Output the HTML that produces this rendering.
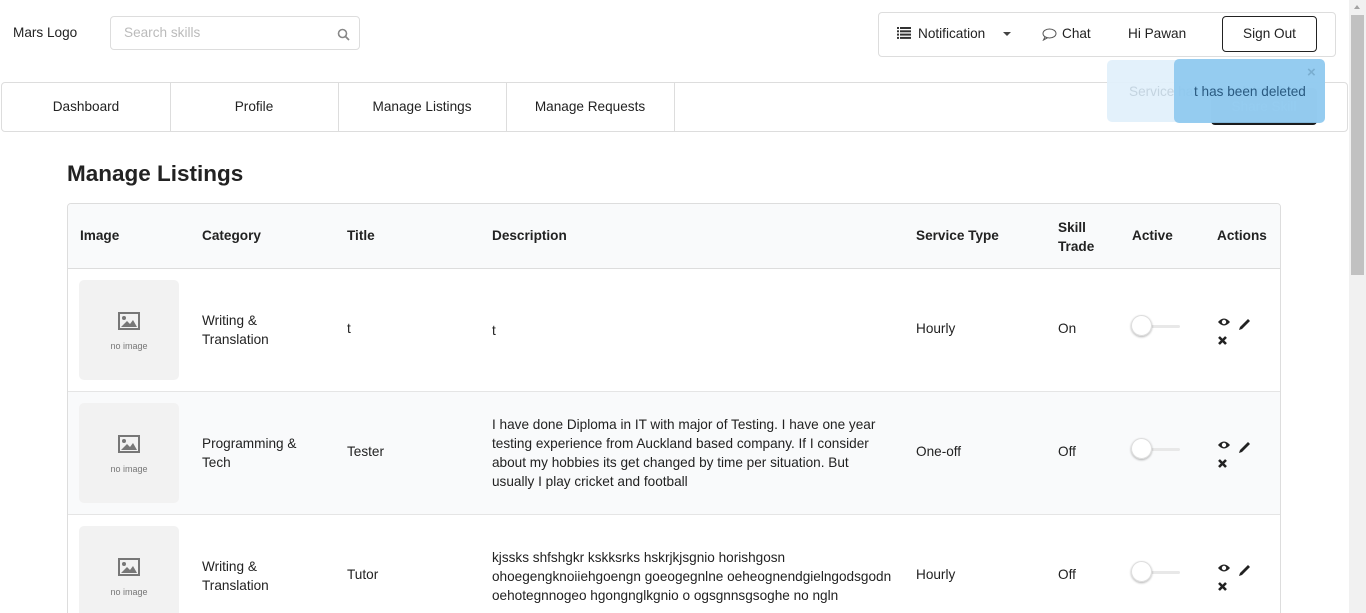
<!DOCTYPE html>
<html style="width:1366px;height:613px;overflow:hidden"><head><meta charset="utf-8"><style>
*{box-sizing:border-box;margin:0;padding:0}
body{width:1366px;height:613px;overflow:hidden;background:#fff;font-family:"Liberation Sans",sans-serif;color:#222;font-size:13.6px;position:relative}
.a{position:absolute}
.nav{left:1px;top:82px;width:1347px;height:50px;border:1px solid #ddd;border-radius:4px}
.nav div{position:absolute;top:0;height:48px;line-height:48px;text-align:center;width:169px;border-right:1px solid #ddd}
.hd{font-weight:bold;font-size:13.6px}
.img{width:100px;height:100px;background:#f2f2f2;border-radius:5px}
.img span{position:absolute;left:0;right:0;top:61px;text-align:center;font-size:9px;color:#777}
</style></head><body>
<div class="a" style="left:13px;top:25px">Mars Logo</div>
<div class="a" style="left:110px;top:16px;width:250px;height:34px;border:1px solid #ddd;border-radius:4px"><span class="a" style="left:13px;top:8px;color:#bbb">Search skills</span>
<svg class="a" style="left:226px;top:11px" width="13" height="13" viewBox="0 0 13 13"><circle cx="5.5" cy="5.5" r="4" fill="none" stroke="#888" stroke-width="1.6"/><path d="M8.5 8.5L12 12" stroke="#888" stroke-width="1.8"/></svg></div>
<div class="a" style="left:878px;top:12px;width:458px;height:45px;border:1px solid #ddd;border-radius:4px"></div>
<svg class="a" style="left:897px;top:27px" width="14" height="12" viewBox="0 0 14 12"><g fill="#333"><rect x="0" y="0" width="2" height="2"/><rect x="3" y="0" width="11" height="2"/><rect x="0" y="3.3" width="2" height="2"/><rect x="3" y="3.3" width="11" height="2"/><rect x="0" y="6.6" width="2" height="2"/><rect x="3" y="6.6" width="11" height="2"/><rect x="0" y="9.9" width="2" height="2"/><rect x="3" y="9.9" width="11" height="2"/></g></svg>
<div class="a" style="left:918px;top:26px">Notification</div>
<div class="a" style="left:1003px;top:32px;border:4px solid transparent;border-top:4px solid #444;border-bottom:0"></div>
<svg class="a" style="left:1042px;top:28px" width="15" height="13" viewBox="0 0 15 13"><ellipse cx="7.5" cy="5.5" rx="6.5" ry="4.5" fill="none" stroke="#555" stroke-width="1"/><path d="M3 9L1.5 12L5.5 9.8" fill="none" stroke="#555" stroke-width="1"/></svg>
<div class="a" style="left:1062px;top:26px">Chat</div>
<div class="a" style="left:1128px;top:26px">Hi Pawan</div>
<div class="a" style="left:1222px;top:16px;width:95px;height:36px;border:1px solid #222;border-radius:4px;text-align:center;line-height:34px">Sign Out</div>
<div class="a nav"><div style="left:0">Dashboard</div><div style="left:168px">Profile</div><div style="left:336px">Manage Listings</div><div style="left:504px">Manage Requests</div></div>
<div class="a" style="left:1211px;top:88px;width:106px;height:37px;background:#1b1c1d;border-radius:4px;color:#fff;text-align:center;line-height:37px">Share Skill</div>
<div class="a" style="left:1107px;top:60px;width:218px;height:62px;background:rgba(225,240,251,0.93);border-radius:5px"><span class="a" style="left:22px;top:24px;color:#c4d4e0">Service has been deleted</span></div>
<div class="a" style="left:1174px;top:59px;width:151px;height:64px;background:rgba(140,200,238,0.9);border-radius:5px"><span class="a" style="left:20px;top:25px;color:#2a5a80">t has been deleted</span><span class="a" style="left:133px;top:5px;color:#7aaed0;font-weight:bold;font-size:15px">×</span></div>
<div class="a" style="left:67px;top:161px;font-size:22.5px;font-weight:bold;color:#222">Manage Listings</div>
<div class="a" style="left:67px;top:203px;width:1214px;height:420px;border:1px solid #ddd;border-radius:4px;overflow:hidden">
<div class="a" style="left:0;top:0;width:1214px;height:65px;background:#f9fafb;border-bottom:1px solid #ddd"></div>
<div class="a" style="left:0;top:187px;width:1214px;height:124px;background:#f9fafb;border-top:1px solid #e5e5e5;border-bottom:1px solid #e5e5e5"></div>
</div>
<div class="a hd" style="left:80px;top:228px">Image</div>
<div class="a hd" style="left:202px;top:228px">Category</div>
<div class="a hd" style="left:347px;top:228px">Title</div>
<div class="a hd" style="left:492px;top:228px">Description</div>
<div class="a hd" style="left:916px;top:228px">Service Type</div>
<div class="a hd" style="left:1058px;top:218px;line-height:19px">Skill<br>Trade</div>
<div class="a hd" style="left:1132px;top:228px">Active</div>
<div class="a hd" style="left:1217px;top:228px">Actions</div>
<div id="rows"></div>
<script>
var rows=[[280,"Writing &<br>Translation","t","t","Hourly","On"],[403,"Programming &<br>Tech","Tester","I have done Diploma in IT with major of Testing. I have one year<br>testing experience from Auckland based company. If I consider<br>about my hobbies its get changed by time per situation. But<br>usually I play cricket and football","One-off","Off"],[526,"Writing &<br>Translation","Tutor","kjssks shfshgkr kskksrks hskrjkjsgnio horishgosn<br>ohoegengknoiiehgoengn goeogegnlne oeheognendgielngodsgodn<br>oehotegnnogeo hgongnglkgnio o ogsgnnsgsoghe no ngln","Hourly","Off"]];
var h="";rows.forEach(function(r){var y=r[0],c=y+50;var dl=(r[3].split("<br>").length);
h+='<div class="a img" style="left:79px;top:'+y+'px"><svg class="a" style="left:39px;top:32px" width="22" height="18" viewBox="0 0 22 18"><rect x="1" y="1" width="20" height="16" fill="none" stroke="#777" stroke-width="2"/><circle cx="6" cy="6" r="2" fill="#777"/><path d="M3 15L9 9L12 12L15 8L19 15Z" fill="#777"/></svg><span>no image</span></div>';
h+='<div class="a" style="left:202px;top:'+(c-19)+'px;line-height:19px">'+r[1]+'</div>';
h+='<div class="a" style="left:347px;top:'+(c-9)+'px">'+r[2]+'</div>';
h+='<div class="a" style="left:492px;top:'+(c-dl*19/2)+'px;line-height:19px">'+r[3]+'</div>';
h+='<div class="a" style="left:916px;top:'+(c-9)+'px">'+r[4]+'</div>';
h+='<div class="a" style="left:1058px;top:'+(c-9)+'px">'+r[5]+'</div>';
h+='<div class="a" style="left:1140px;top:'+(c-5)+'px;width:40px;height:3px;background:#e8e8e8;border-radius:2px"></div><div class="a" style="left:1131px;top:'+(c-15)+'px;width:21px;height:21px;border-radius:50%;background:#fff;box-shadow:0 1px 2px rgba(0,0,0,.3),inset 0 0 0 1px #ddd"></div>';
h+='<svg class="a" style="left:1217px;top:'+(c-14)+'px" width="36" height="30" viewBox="0 0 36 30"><path d="M1 6Q7 -1 13 6Q7 13 1 6Z" fill="#222"/><circle cx="7" cy="6" r="2.2" fill="#fff"/><path d="M23 11L31 3L33 5L25 13L22 14Z" fill="#222"/><path d="M2 21L9 28M9 21L2 28" stroke="#222" stroke-width="2.6"/></svg>';});
document.getElementById("rows").innerHTML=h;
</script>
<div class="a" style="left:1349px;top:0;width:17px;height:613px;background:#f1f1f1"></div>
<div class="a" style="left:1351px;top:15px;width:13px;height:260px;background:#c1c1c1"></div>
<div class="a" style="left:1354px;top:5px;border:3px solid transparent;border-bottom:4px solid #a3a3a3;border-top:0"></div>
</body></html>
